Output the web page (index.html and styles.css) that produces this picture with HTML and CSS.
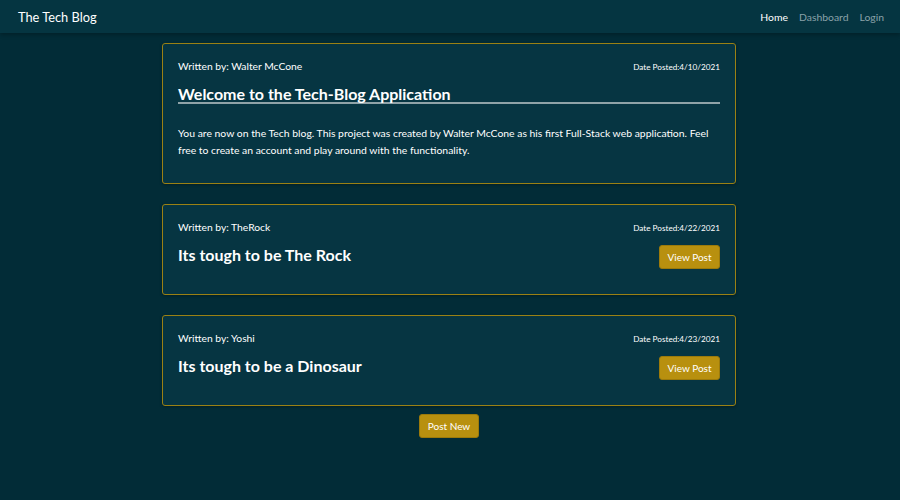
FILE: index.html
```html
<!DOCTYPE html>
<html lang="en">
<head>
<meta charset="utf-8">
<title>The Tech Blog</title>
<link rel="stylesheet" href="styles.css">
</head>
<body>
<nav class="navbar">
  <a class="brand" href="#">The Tech Blog</a>
  <div class="nav-links">
    <a class="nav-link active" href="#">Home</a>
    <a class="nav-link" href="#">Dashboard</a>
    <a class="nav-link" href="#">Login</a>
  </div>
</nav>
<main class="container">
  <article class="card card-intro">
    <div class="card-meta">
      <span class="author">Written by: Walter McCone</span>
      <span class="date">Date Posted:4/10/2021</span>
    </div>
    <h2 class="card-title underlined">Welcome to the Tech-Blog Application</h2>
    <p class="card-body">You are now on the Tech blog. This project was created by Walter McCone as his first Full-Stack web application. Feel free to create an account and play around with the functionality.</p>
  </article>
  <article class="card">
    <div class="card-meta">
      <span class="author">Written by: TheRock</span>
      <span class="date">Date Posted:4/22/2021</span>
    </div>
    <div class="card-row">
      <h2 class="card-title">Its tough to be The Rock</h2>
      <button class="btn">View Post</button>
    </div>
  </article>
  <article class="card">
    <div class="card-meta">
      <span class="author">Written by: Yoshi</span>
      <span class="date">Date Posted:4/23/2021</span>
    </div>
    <div class="card-row">
      <h2 class="card-title">Its tough to be a Dinosaur</h2>
      <button class="btn">View Post</button>
    </div>
  </article>
  <div class="actions">
    <button class="btn">Post New</button>
  </div>
</main>
</body>
</html>
```
FILE: styles.css
```css
* { box-sizing: border-box; }
html, body { margin: 0; padding: 0; }
body {
  background: #022c37;
  color: #ffffff;
  font-family: Lato, "Open Sans", sans-serif;
  height: 500px;
}
.navbar {
  height: 33px;
  background: #053541;
  display: flex;
  align-items: center;
  justify-content: space-between;
  padding: 0 16px 0 18px;
  box-shadow: 0 2px 4px rgba(0,0,0,0.25);
}
.brand {
  color: #fff;
  text-decoration: none;
  font-size: 12.8px;
}
.nav-links { display: flex; gap: 11px; }
.nav-link {
  color: #8aa2a9;
  text-decoration: none;
  font-size: 10.4px;
}
.nav-link.active { color: #fff; }
.container {
  width: 574px;
  margin: 10px 0 0 calc(50% - 288px);
  display: flex;
  flex-direction: column;
  gap: 20px;
}
.card {
  background: #063542;
  border: 1px solid #9a8114;
  border-radius: 3px;
  padding: 15px 15px 25px 15px;
  box-shadow: 0 1px 3px rgba(0,0,0,0.3);
}
.card-intro { padding-bottom: 24px; }
.card-meta {
  display: flex;
  justify-content: space-between;
  align-items: baseline;
  height: 14px;
  line-height: 14px;
}
.author { font-size: 10.3px; }
.date { font-size: 8.2px; }
.card-title {
  margin: 0;
  font-size: 16px;
  line-height: 20px;
  font-weight: 700;
}
.underlined {
  margin-top: 13px;
  border-bottom: 2px solid #8fa3a8;
  line-height: 16px;
}
.card-body {
  margin: 21px 0 0;
  font-size: 10.4px;
  line-height: 17px;
}
.card-row {
  display: flex;
  justify-content: space-between;
  align-items: flex-start;
  margin-top: 11px;
}
.btn {
  background: #b8900f;
  color: #fff;
  border: 1px solid #9c7a0b;
  border-radius: 3px;
  font-family: Lato, "Open Sans", sans-serif;
  font-size: 10px;
  height: 24px;
  width: 61px;
  padding: 0;
}
.actions {
  display: flex;
  justify-content: center;
  margin-top: -12px;
}
.actions .btn { width: 60px; }
```
